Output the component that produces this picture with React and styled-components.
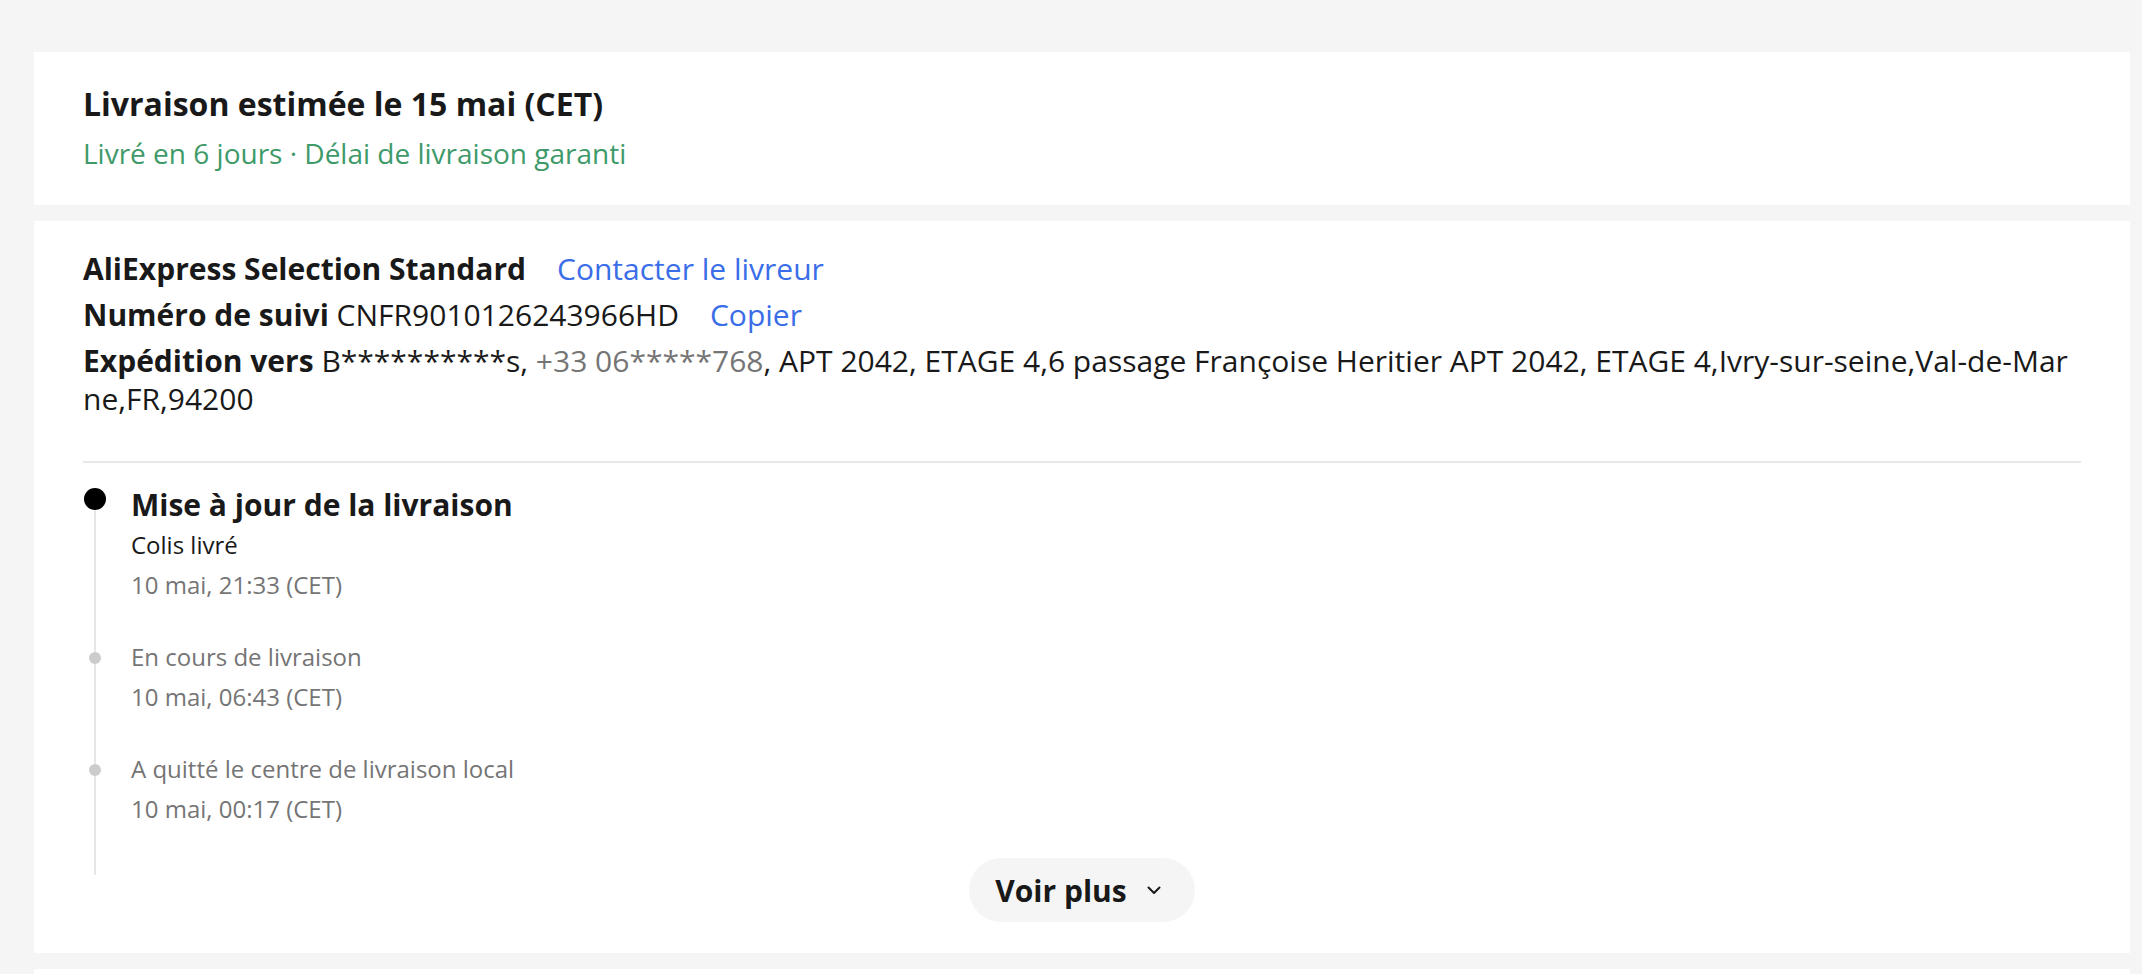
import React from "react";
import styled, { createGlobalStyle } from "styled-components";

const GlobalStyle = createGlobalStyle`
  html, body { margin: 0; padding: 0; background: #f5f5f5; }
  body { font-family: "Open Sans", "Noto Sans", sans-serif; color: #191919; }
  * { box-sizing: border-box; }
`;

const Page = styled.div`
  padding: 52px 12px 0 34px;
  display: flex;
  flex-direction: column;
  gap: 16px;
`;

const Card = styled.section`
  background: #fff;
  padding: ${(p) => p.$padding || "30px 49px"};
  min-height: ${(p) => p.$minHeight || "auto"};
`;

const Title = styled.h2`
  margin: 0 0 8px;
  font-size: 32px;
  line-height: 44px;
  font-weight: 700;
  color: #191919;
`;

const Green = styled.div`
  font-size: 28px;
  line-height: 38px;
  color: #3e9a69;
`;

const InfoRow = styled.div`
  font-size: 30px;
  line-height: 38px;
  color: #191919;
  margin-bottom: 8px;
  word-break: break-all;
  &:last-of-type { margin-bottom: 0; }
`;

const Label = styled.b`
  font-weight: 700;
`;

const Muted = styled.span`
  color: #757575;
`;

const Link = styled.a`
  color: #3a6ee8;
  margin-left: 31px;
  text-decoration: none;
  cursor: pointer;
`;

const Divider = styled.hr`
  border: 0;
  height: 2px;
  background: #e8e8e8;
  margin: 43px 0 21px;
`;

const Timeline = styled.ol`
  list-style: none;
  margin: 0;
  padding: 0;
`;

const Item = styled.li`
  display: grid;
  grid-template-columns: 24px 1fr;
  column-gap: 24px;
`;

const Rail = styled.div`
  display: flex;
  flex-direction: column;
  align-items: center;
`;

const RailSegment = styled.span`
  width: 2px;
  background: ${(p) => (p.$hidden ? "transparent" : "#e6e6e6")};
  height: ${(p) => (p.$grow ? "auto" : `${p.$h}px`)};
  flex: ${(p) => (p.$grow ? "1" : "none")};
`;

const Dot = styled.span`
  width: ${(p) => (p.$active ? 22 : 12)}px;
  height: ${(p) => (p.$active ? 22 : 12)}px;
  border-radius: 50%;
  background: ${(p) => (p.$active ? "#000" : "#cccccc")};
  flex: none;
`;

const Content = styled.div`
  padding-bottom: ${(p) => p.$pb}px;
`;

const EventTitle = styled.div`
  font-size: ${(p) => (p.$active ? 30 : 24)}px;
  line-height: 41px;
  font-weight: ${(p) => (p.$active ? 700 : 400)};
  color: ${(p) => (p.$active ? "#191919" : "#757575")};
`;

const EventText = styled.div`
  font-size: 24px;
  line-height: 40px;
  color: ${(p) => (p.$dark ? "#191919" : "#757575")};
`;

const MoreRow = styled.div`
  display: flex;
  justify-content: center;
  margin-top: -17px;
`;

const MoreButton = styled.button`
  display: inline-flex;
  align-items: center;
  gap: 20px;
  height: 64px;
  padding: 0 34px 0 26px;
  border: 0;
  border-radius: 32px;
  background: #f5f5f5;
  font-family: "Open Sans", "Noto Sans", sans-serif;
  font-size: 30px;
  font-weight: 700;
  color: #191919;
  cursor: pointer;
`;

const events = [
  { title: "Mise à jour de la livraison", sub: "Colis livré", date: "10 mai, 21:33 (CET)", active: true },
  { title: "En cours de livraison", date: "10 mai, 06:43 (CET)" },
  { title: "A quitté le centre de livraison local", date: "10 mai, 00:17 (CET)" },
];

export default function App() {
  return (
    <>
      <GlobalStyle />
      <Page>
        <Card $padding="30px 49px 33px">
          <Title>Livraison estimée le 15 mai (CET)</Title>
          <Green>Livré en 6 jours · Délai de livraison garanti</Green>
        </Card>
        <Card $padding="29px 49px 31px">
          <InfoRow>
            <Label>AliExpress Selection Standard</Label>
            <Link>Contacter le livreur</Link>
          </InfoRow>
          <InfoRow>
            <Label>Numéro de suivi</Label> CNFR9010126243966HD
            <Link>Copier</Link>
          </InfoRow>
          <InfoRow>
            <Label>Expédition vers</Label> B**********s, <Muted>+33 06*****768</Muted>, APT 2042, ETAGE 4,6 passage
            Françoise Heritier APT 2042, ETAGE 4,Ivry-sur-seine,Val-de-Marne,FR,94200
          </InfoRow>
          <Divider />
          <Timeline>
            {events.map((e, i) => (
              <Item key={i}>
                <Rail>
                  <RailSegment $h={e.active ? 4 : 16} $hidden={i === 0} />
                  <Dot $active={e.active} />
                  <RailSegment $grow />
                </Rail>
                <Content $pb={i === events.length - 1 ? 46 : 31}>
                  <EventTitle $active={e.active}>{e.title}</EventTitle>
                  {e.sub && <EventText $dark>{e.sub}</EventText>}
                  <EventText>{e.date}</EventText>
                </Content>
              </Item>
            ))}
          </Timeline>
          <MoreRow>
            <MoreButton>
              Voir plus
              <svg width="14" height="9" viewBox="0 0 14 9" fill="none">
                <path d="M1.5 1.5 L7 7 L12.5 1.5" stroke="#191919" strokeWidth="2" strokeLinecap="round" strokeLinejoin="round" />
              </svg>
            </MoreButton>
          </MoreRow>
        </Card>
        <Card $minHeight="300px" />
      </Page>
    </>
  );
}
